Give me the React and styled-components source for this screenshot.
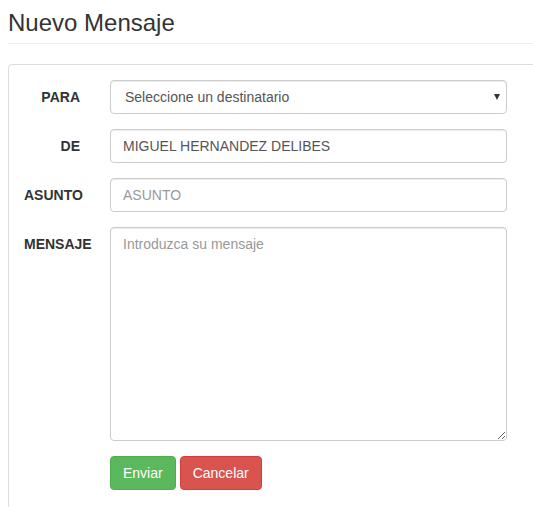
import React from "react";
import styled, { createGlobalStyle } from "styled-components";

const Global = createGlobalStyle`
  html, body { margin: 0; padding: 0; background: #fff; overflow: hidden; }
  body { font-family: "Liberation Sans", Arial, sans-serif; font-size: 14px; line-height: 20px; color: #333; }
  * { box-sizing: border-box; }
`;

const Page = styled.div`
  width: 560px;
  padding: 10px 0 0 8px;
`;

const Title = styled.h3`
  margin: 0;
  font-size: 24px;
  font-weight: 500;
  line-height: 26px;
  padding-bottom: 7px;
  border-bottom: 1px solid #eee;
  color: #333;
`;

const Well = styled.div`
  margin-top: 20px;
  border: 1px solid #ddd;
  border-radius: 4px;
  padding: 15px 15px 30px 15px;
  display: grid;
  grid-template-columns: 56px 397px;
  column-gap: 30px;
  row-gap: 15px;
`;

const Label = styled.label`
  padding-top: 7px;
  text-align: right;
  font-weight: bold;
  white-space: nowrap;
  color: #333;
`;

const fieldBase = `
  width: 100%;
  border: 1px solid #ccc;
  border-radius: 4px;
  background: #fff;
  font-family: "Liberation Sans", Arial, sans-serif;
  font-size: 14px;
  line-height: 20px;
  color: #555;
  box-shadow: inset 0 1px 1px rgba(0,0,0,.075);
  outline: none;
  &::placeholder { color: #999; }
`;

const Input = styled.input`
  ${fieldBase}
  height: 34px;
  padding: 6px 12px;
`;

const SelectWrap = styled.div`
  position: relative;
`;

const Select = styled.select`
  ${fieldBase}
  height: 34px;
  padding: 6px 12px 6px 14px;
  appearance: none;
  -webkit-appearance: none;
`;

const Caret = styled.span`
  position: absolute;
  right: 7px;
  top: 14px;
  width: 0;
  height: 0;
  border-left: 3.5px solid transparent;
  border-right: 3.5px solid transparent;
  border-top: 6px solid #333;
  pointer-events: none;
`;

const TextArea = styled.textarea`
  ${fieldBase}
  display: block;
  height: 214px;
  padding: 6px 12px;
  resize: both;
`;

const Actions = styled.div`
  grid-column: 2;
  display: flex;
  gap: 4px;
`;

const Button = styled.button`
  height: 34px;
  padding: 6px 12px;
  font-family: "Liberation Sans", Arial, sans-serif;
  font-size: 14px;
  line-height: 20px;
  color: #fff;
  border-radius: 4px;
  border: 1px solid ${(p) => (p.$variant === "danger" ? "#d43f3a" : "#4cae4c")};
  background: ${(p) => (p.$variant === "danger" ? "#d9534f" : "#5cb85c")};
  cursor: pointer;
`;

export default function App() {
  return (
    <>
      <Global />
      <Page>
        <Title>Nuevo Mensaje</Title>
        <Well>
          <Label>PARA</Label>
          <SelectWrap>
            <Select defaultValue="">
              <option value="">Seleccione un destinatario</option>
            </Select>
            <Caret />
          </SelectWrap>
          <Label>DE</Label>
          <Input defaultValue="MIGUEL HERNANDEZ DELIBES" readOnly />
          <Label>ASUNTO</Label>
          <Input placeholder="ASUNTO" />
          <Label>MENSAJE</Label>
          <TextArea placeholder="Introduzca su mensaje" />
          <Actions>
            <Button $variant="success">Enviar</Button>
            <Button $variant="danger">Cancelar</Button>
          </Actions>
        </Well>
      </Page>
    </>
  );
}
